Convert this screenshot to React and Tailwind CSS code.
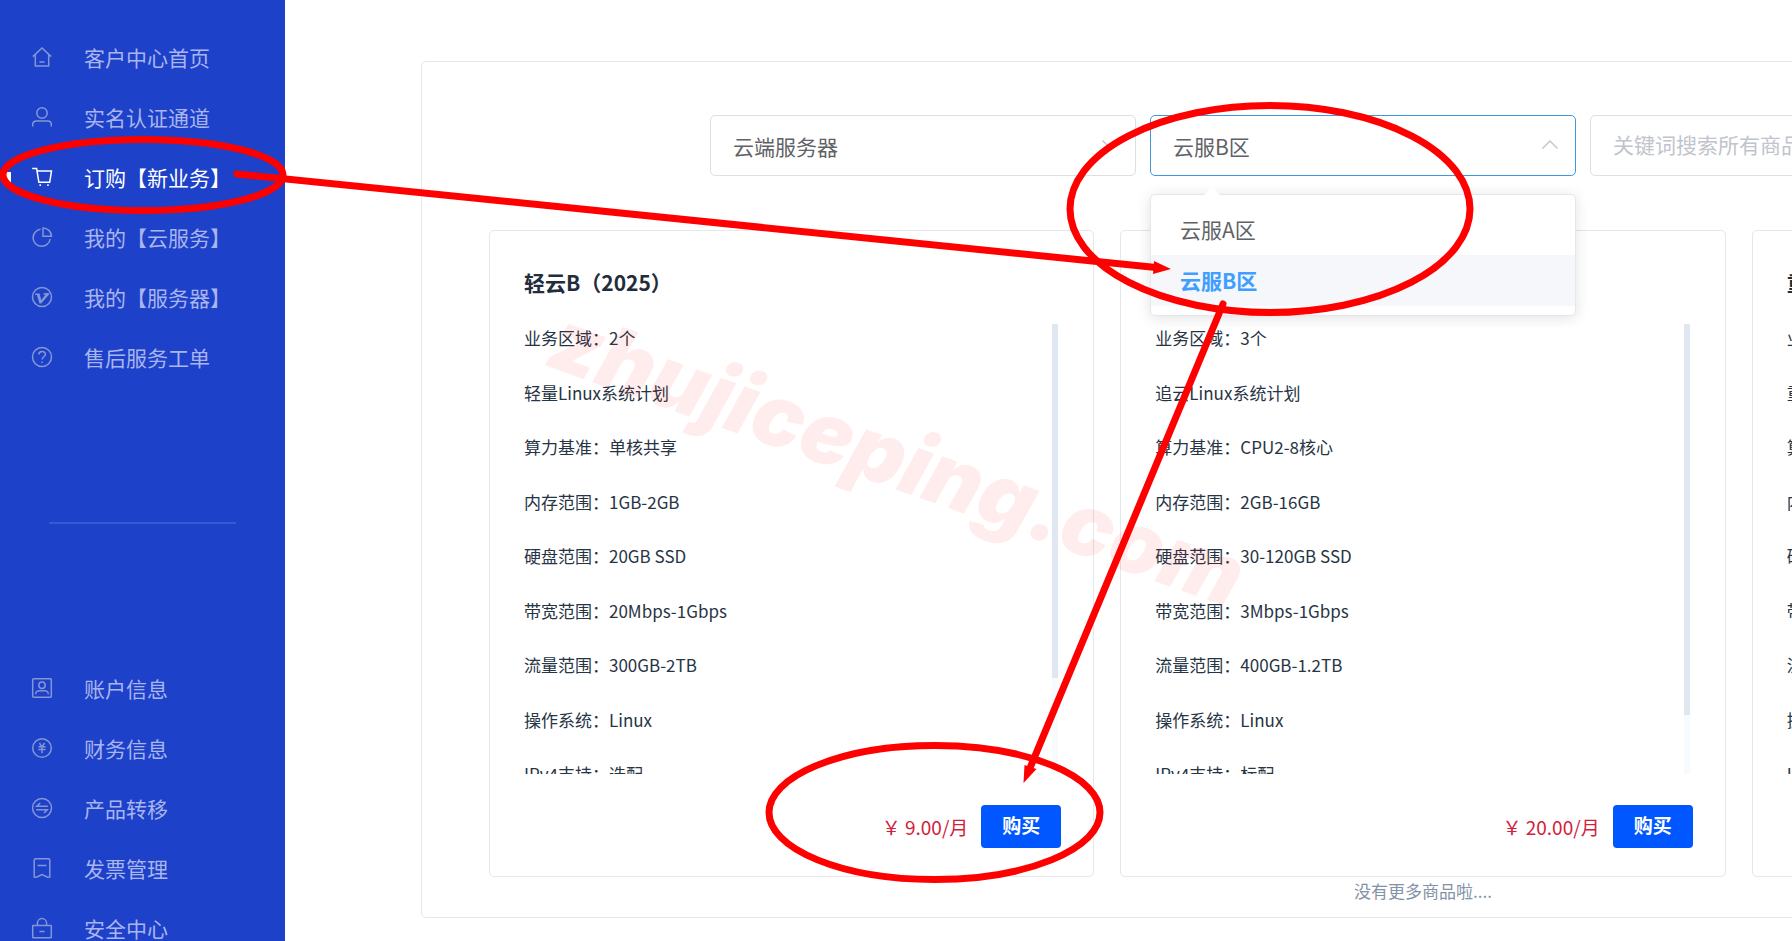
import React from "react";

const icons = {
  home: (
    <>
      <path d="M.8 9.6 10 1l9.2 8.6" />
      <path d="M3.3 7.6V19h13.4V7.6M7.4 15h5.2" />
    </>
  ),
  user: (
    <>
      <circle cx="10" cy="6" r="5.2" />
      <path d="M.7 19.6v-2.1c0-2.2 1.5-3.6 3.6-3.6h11.4c2.1 0 3.6 1.4 3.6 3.6v2.1" />
    </>
  ),
  cart: (
    <>
      <path d="M.2 1.6h4.4l2.3 13.7h10.8l1.8-11.4H5" />
      <path d="M8.2 17.2v1.8M16 17.2v1.8" />
    </>
  ),
  pie: (
    <>
      <path d="M8.6 2.2A8.6 8.6 0 1 0 18.2 12" />
      <path d="M11 .9v8.4h8.4A8.4 8.4 0 0 0 11 .9Z" />
    </>
  ),
  vee: (
    <>
      <circle cx="10" cy="10" r="9.5" />
      <path d="M3.2 7.2H7l1.9 7.4 6-7.6h-3.4M5.4 7.4 8 15.8h.9L16.6 7l-2-.6" />
    </>
  ),
  help: (
    <>
      <circle cx="10" cy="10" r="9.5" />
      <path d="M6.8 7.6c0-4.2 6.6-4.2 6.6-.3 0 2.4-3.3 2.6-3.3 5.3M10.1 14.6v1.5" />
    </>
  ),
  account: (
    <>
      <rect x=".7" y=".7" width="18.6" height="18.6" rx="1" />
      <circle cx="10" cy="7.2" r="3.2" />
      <path d="M3.8 16.2v-.8c0-1.6 2-2.6 3.6-2.6h5.2c1.6 0 3.6 1 3.6 2.6v.8" />
    </>
  ),
  yen: (
    <>
      <circle cx="10" cy="10" r="9.3" />
      <path d="m7.4 5 2.6 3.8L12.6 5M6.4 8.8h7.2M6.4 11.4h7.2M10 8.8v6.4" />
    </>
  ),
  transfer: (
    <>
      <circle cx="10" cy="10" r="9.5" />
      <path d="M15.8 8.2H4.8L8.2 5M4.2 11.8h11L12 15" />
    </>
  ),
  bill: <path d="M2.2 19V2.2c0-.8.5-1.4 1.4-1.4h12.8c.9 0 1.4.6 1.4 1.4V19l-2.2.2L10 16.6l-5.6 2.6L2.2 19ZM5.6 7.6h8.8" />,
  lock: (
    <>
      <rect x=".7" y="7.4" width="18.6" height="12.4" rx=".6" />
      <path d="M5.4 7.4V5.2a4.6 4.6 0 0 1 9.2 0v2.2M7.4 13.6h5.2" />
    </>
  ),
};

const mainMenu = [
  ["home", "客户中心首页"],
  ["user", "实名认证通道"],
  ["cart", "订购【新业务】"],
  ["pie", "我的【云服务】"],
  ["vee", "我的【服务器】"],
  ["help", "售后服务工单"],
];

const accountMenu = [
  ["account", "账户信息"],
  ["yen", "财务信息"],
  ["transfer", "产品转移"],
  ["bill", "发票管理"],
  ["lock", "安全中心"],
];

const products = [
  {
    title: "轻云B（2025）",
    price: "9.00",
    thumb: "h-[354px]",
    specs: [
      "业务区域：2个",
      "轻量Linux系统计划",
      "算力基准：单核共享",
      "内存范围：1GB-2GB",
      "硬盘范围：20GB SSD",
      "带宽范围：20Mbps-1Gbps",
      "流量范围：300GB-2TB",
      "操作系统：Linux",
      "IPv4支持：选配",
    ],
  },
  {
    title: "追云B（2025）",
    price: "20.00",
    thumb: "h-[391px]",
    specs: [
      "业务区域：3个",
      "追云Linux系统计划",
      "算力基准：CPU2-8核心",
      "内存范围：2GB-16GB",
      "硬盘范围：30-120GB SSD",
      "带宽范围：3Mbps-1Gbps",
      "流量范围：400GB-1.2TB",
      "操作系统：Linux",
      "IPv4支持：标配",
    ],
  },
  {
    title: "重云B（2025）",
    price: "40.00",
    thumb: "h-[391px]",
    specs: [
      "业务区域：3个",
      "重云Linux系统计划",
      "算力基准：CPU4-16核心",
      "内存范围：4GB-32GB",
      "硬盘范围：60-240GB SSD",
      "带宽范围：5Mbps-1Gbps",
      "流量范围：600GB-2TB",
      "操作系统：Linux",
      "IPv4支持：标配",
    ],
  },
];

function MenuList({ items, active }) {
  return (
    <ul>
      {items.map(([icon, label]) => {
        const on = label === active;
        return (
          <li key={label} className="relative">
            {on && <span className="absolute left-1 top-6 h-3 w-[7px] bg-white" />}
            <a href="#" className={`flex h-[60px] items-center gap-8 pl-8 text-[21px] ${on ? "text-white" : "text-[#a9b5ee]"}`}>
              <svg
                viewBox="0 0 20 20"
                className={`mb-0.5 size-5 shrink-0 overflow-visible ${on ? "stroke-white" : "stroke-[#8496d4]"}`}
                fill="none"
                strokeWidth="1.5"
                aria-hidden="true"
              >
                {icons[icon]}
              </svg>
              <span className="whitespace-nowrap">{label}</span>
            </a>
          </li>
        );
      })}
    </ul>
  );
}

function Chevron({ up }) {
  return (
    <svg
      viewBox="0 0 16 9"
      className="pointer-events-none absolute right-[18px] top-[25px] h-[9px] w-4 stroke-[#c0c4cc]"
      fill="none"
      strokeWidth="1.4"
      aria-hidden="true"
    >
      <path d={up ? "M.5 8.5 8 1l7.5 7.5" : "M.5.5 8 8 15.5.5"} />
    </svg>
  );
}

const field = "h-[61px] w-full appearance-none rounded-[5px] border bg-white px-[22px] text-[21px] outline-none";

function Filters() {
  return (
    <form className="flex gap-3.5 pl-[221px]">
      <div className="relative w-[426px] shrink-0">
        <select aria-label="产品类型" className={`${field} border-[#dcdfe6] pt-0.5 text-[#606266]`}>
          <option>云端服务器</option>
        </select>
        <Chevron />
      </div>
      <div className="relative w-[426px] shrink-0">
        <select aria-label="区域" defaultValue="云服B区" className={`${field} border-[#4098dc] pt-0.5 text-[#606266]`}>
          <option>云服A区</option>
          <option>云服B区</option>
        </select>
        <Chevron up />
        <div className="absolute left-0 top-[79px] z-10 w-full rounded-[5px] border border-[#e4e7ed] bg-white py-[9px] text-[21px] shadow-[0_2px_14px_rgba(0,0,0,0.12)]">
          <svg viewBox="0 0 16 8" className="absolute -top-2 left-[53px] h-2 w-4" aria-hidden="true">
            <path d="M0 8 8 0l8 8Z" fill="#fff" />
          </svg>
          <button type="button" className="block h-[51px] w-full pl-[29px] text-left text-[#606266]">云服A区</button>
          <button type="button" className="block h-[51px] w-full bg-[#f5f7fa] pl-[29px] text-left font-bold text-[#409eff]">云服B区</button>
        </div>
      </div>
      <div className="w-[426px] shrink-0">
        <input type="text" aria-label="搜索" placeholder="关键词搜索所有商品" className={`${field} border-[#dcdfe6] pb-[3px] placeholder:text-[#c0c4cc]`} />
      </div>
    </form>
  );
}

function ProductCard({ title, price, specs, thumb }) {
  return (
    <article className="rounded-[5px] border border-[#e4e7eb] pb-7 pl-[34px] pr-8 pt-[37px]">
      <h2 className="text-[21px] font-bold leading-7 text-[#1f2d3d]">{title}</h2>
      <div className="mr-[3px] mt-7 flex h-[450px] justify-between overflow-hidden">
        <ul className="flex h-[462px] flex-col justify-between pt-0.5 text-[17px] leading-6 text-[#273444]">
          {specs.map((s) => (
            <li key={s}>{s}</li>
          ))}
        </ul>
        <div className="w-1.5 bg-[#f7fbfd]">
          <div className={`bg-[#dfe7f1] ${thumb}`} />
        </div>
      </div>
      <div className="mt-[31px] flex items-center justify-end gap-[13px]">
        <span className="pt-0.5 text-[19px] text-[#d3203c]">￥ {price}/月</span>
        <button type="button" className="h-[43px] w-20 rounded bg-[#0057ff] pb-[3px] text-[19px] font-bold text-white">购买</button>
      </div>
    </article>
  );
}

function Annotations() {
  return (
    <svg className="pointer-events-none absolute inset-0 z-20 h-full w-full" aria-hidden="true">
      <text
        transform="translate(544 365) rotate(19.5)"
        fill="#ff0000"
        fillOpacity="0.07"
        className="font-['Inter',sans-serif] text-[86px] font-black italic"
      >
        zhujiceping.com
      </text>
      <g fill="none" stroke="#ff0000" strokeWidth="7">
        <ellipse cx="143" cy="175" rx="140" ry="35.5" />
        <ellipse cx="1270" cy="209" rx="200" ry="103.5" />
        <ellipse cx="934.5" cy="812.5" rx="165.5" ry="67" />
        <path d="M237 174 1156 267.500M1223 304 1030 768" strokeLinecap="round" />
      </g>
      <path d="M1154 261 1171 269 1153 274ZM1024.500 765 1036.500 769 1023.500 783Z" fill="#ff0000" />
    </svg>
  );
}

export default function App() {
  return (
    <div className="relative flex h-screen overflow-hidden bg-white font-['Noto_Sans_CJK_SC',sans-serif]">
      <nav className="w-[285px] shrink-0 overflow-hidden bg-[#1d41c9] pt-7">
        <MenuList items={mainMenu} active="订购【新业务】" />
        <hr className="mx-[49px] mb-[135px] mt-[134px] h-0.5 border-0 bg-[#3a58d2]" />
        <MenuList items={accountMenu} />
      </nav>
      <main className="min-w-0 flex-1 overflow-hidden pl-[136px] pt-[61px]">
        <section className="min-w-[2004px] rounded-[5px] border border-[#e4e7eb] px-[67px] pb-3 pt-[53px]">
          <Filters />
          <div className="mt-[54px] grid grid-cols-3 gap-[26px]">
            {products.map((p) => (
              <ProductCard key={p.title} {...p} />
            ))}
          </div>
          <p className="text-center text-[17px] leading-7 text-[#8492a6]">没有更多商品啦....</p>
        </section>
      </main>
      <Annotations />
    </div>
  );
}
